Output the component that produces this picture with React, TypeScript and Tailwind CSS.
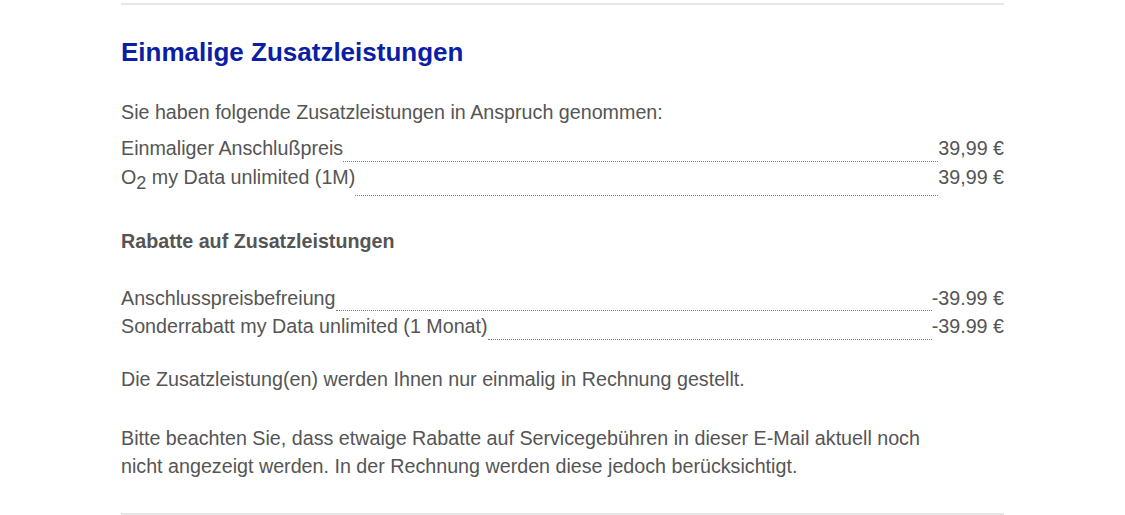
type RowProps = {
  label: React.ReactNode;
  price: string;
  height: string;
  dot: string;
};

function Row({ label, price, height, dot }: RowProps) {
  return (
    <div className={`flex items-start ${height}`}>
      <span className="whitespace-nowrap leading-[28px]">{label}</span>
      <div className={`flex-1 border-b border-dotted border-[#7a7a7a] ${dot}`} />
      <span className="whitespace-nowrap leading-[28px]">{price}</span>
    </div>
  );
}

export default function App() {
  return (
    <div
      className="w-[1125px] h-[515px] bg-white overflow-hidden"
      style={{ fontFamily: '"Liberation Sans", Arial, sans-serif' }}
    >
      <div className="mx-[121px] pt-[3px]">
        <div className="border-t-2 border-[#e6e6e6]" />

        <h2 className="mt-[32px] text-[26px] font-bold text-[#0a1ea6] leading-[30px]">
          Einmalige Zusatzleistungen
        </h2>

        <div className="text-[19.7px] text-[#555] leading-[28px]">
          <p className="mt-[31px]">Sie haben folgende Zusatzleistungen in Anspruch genommen:</p>

          {/* Zusatzleistungen */}
          <div className="mt-[8px]">
            <Row label="Einmaliger Anschlußpreis" price="39,99 €" height="h-[29px]" dot="h-[28px]" />
            <Row
              label={
                <>
                  O<sub className="text-[18px] relative top-[5px] align-baseline">2</sub> my Data unlimited (1M)
                </>
              }
              price="39,99 €"
              height="h-[33px]"
              dot="h-[33px]"
            />
          </div>

          <p className="mt-[31px] font-bold">Rabatte auf Zusatzleistungen</p>

          {/* Rabatte */}
          <div className="mt-[29px]">
            <Row label="Anschlusspreisbefreiung" price="-39.99 €" height="h-[28px]" dot="h-[27px]" />
            <Row
              label="Sonderrabatt my Data unlimited (1 Monat)"
              price="-39.99 €"
              height="h-[28px]"
              dot="h-[28px]"
            />
          </div>

          <p className="mt-[25px]">Die Zusatzleistung(en) werden Ihnen nur einmalig in Rechnung gestellt.</p>

          <p className="mt-[31px] max-w-[810px]">
            Bitte beachten Sie, dass etwaige Rabatte auf Servicegebühren in dieser E-Mail aktuell noch nicht
            angezeigt werden. In der Rechnung werden diese jedoch berücksichtigt.
          </p>
        </div>

        <div className="mt-[33px] border-t-2 border-[#e6e6e6]" />
      </div>
    </div>
  );
}
